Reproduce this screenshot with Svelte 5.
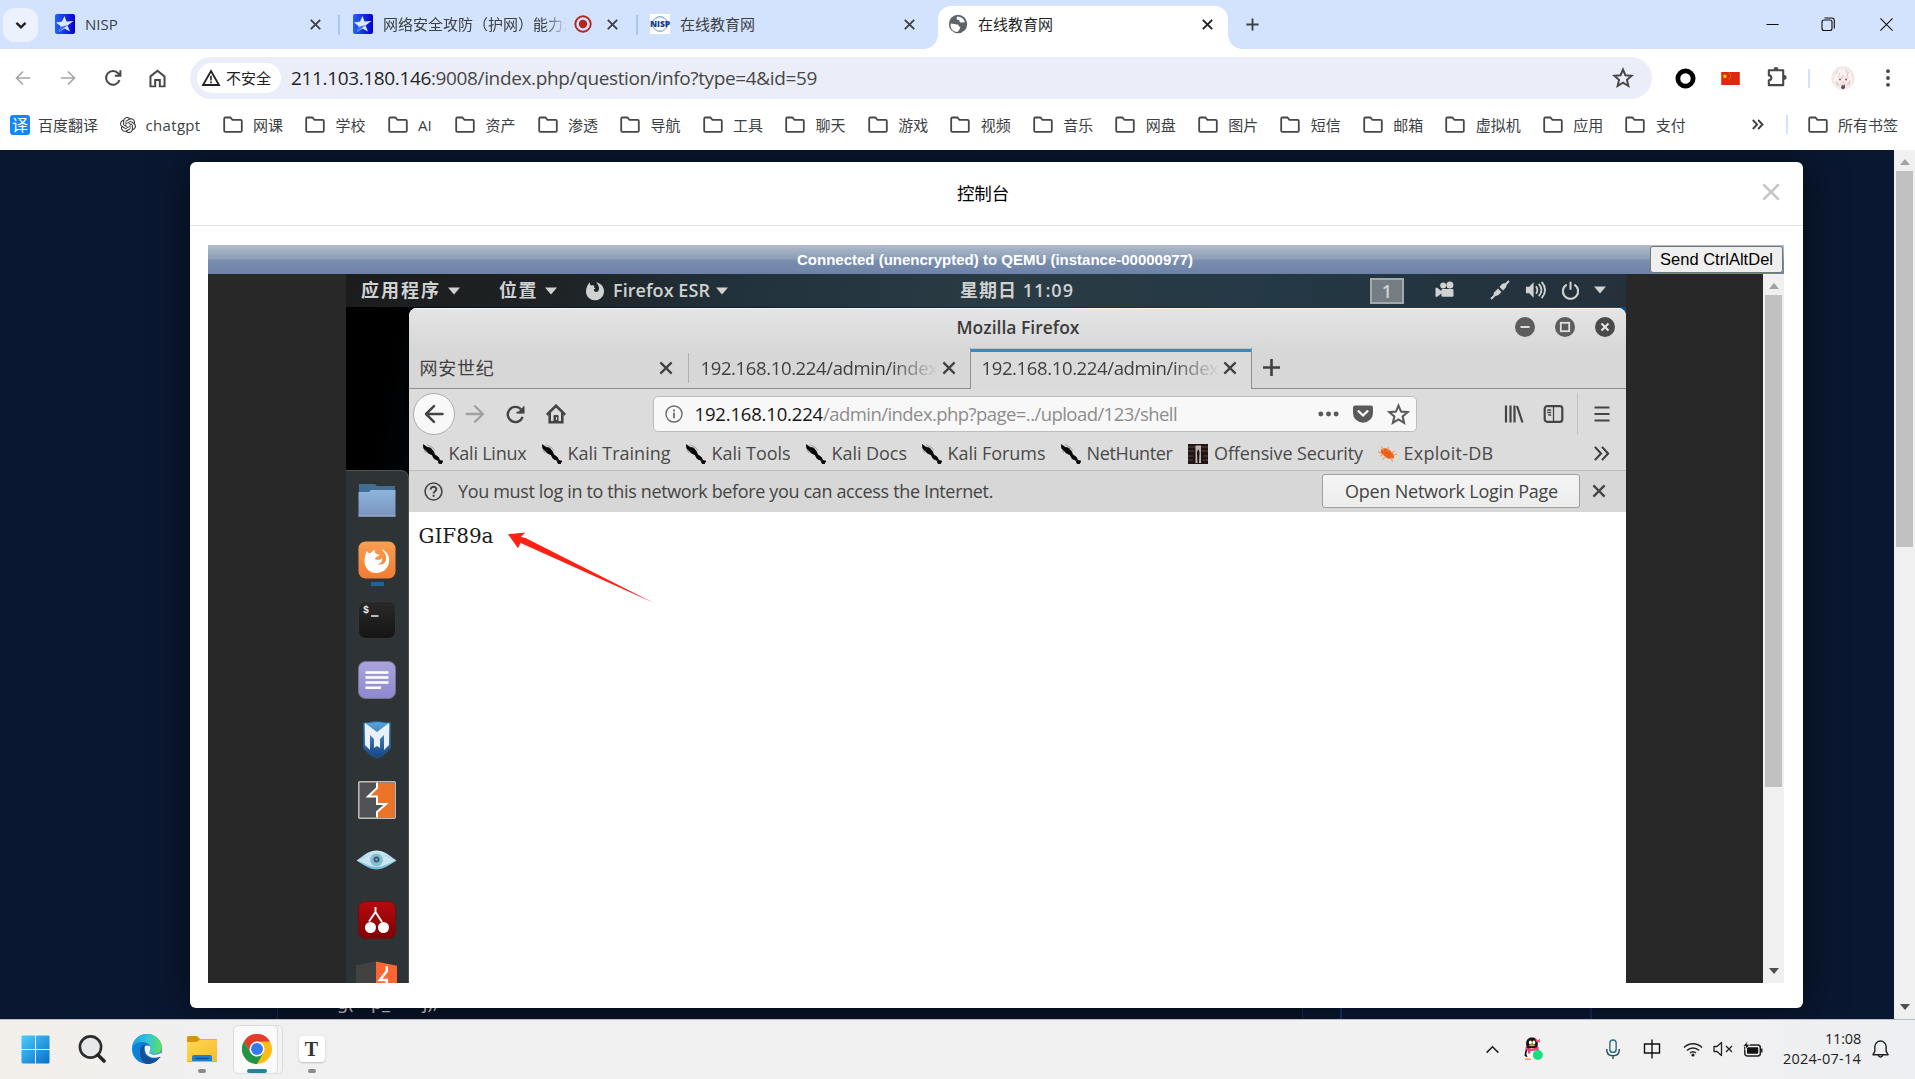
<script>
  // Gives a label a fixed advance width by spreading the difference over its letters.
  function fit(node, width) {
    const range = document.createRange();
    range.selectNodeContents(node);
    const natural = range.getBoundingClientRect().width;
    const count = [...node.textContent].length;
    node.style.letterSpacing = `${(width - natural) / count}px`;
    node.style.width = `${width}px`;
  }

  const cross = '<path d="M3 3l10 10M13 3L3 13" fill="none" stroke="currentColor" stroke-width="2"/>';
  const icons = {
    chevron: ['0 0 16 16', '<path d="M3.500 5.800L8 10.300l4.500-4.500" fill="none" stroke="currentColor" stroke-width="2.400"/>'],
    star: ['0 0 20 20', '<defs><linearGradient id="sg"><stop stop-color="#2463f5"/><stop offset="1" stop-color="#0500d0"/></linearGradient></defs><rect width="20" height="20" rx="2" fill="url(#sg)"/><path d="M9.500 2l2 5.500 7-.5-6 4.500 2.500 6-5.500-3L4 18l1.500-6L1 8.500l6-1z" fill="#dce8ff"/><path d="M5 13l8-2-4 3-5 4z" fill="#3d6ef0"/>'],
    nisp: ['0 0 20 20', '<rect width="20" height="20" fill="#fff"/><circle cx="10" cy="10" r="7.500" fill="none" stroke="#7fa3d8" stroke-width="1"/><path d="M5 15q5 4 10 0M5.500 5q4.500-3.500 9 0" fill="none" stroke="#b2c9ea"/>'],
    globe: ['0 0 20 20', '<circle cx="10" cy="10" r="9.200" fill="#5f6368"/><path d="M2.700 9.500c3 .2 4.300 1 6.300 1s1.500 2.500 3.500 2.500l-1 2.500-2 2.500C4.500 18 2 14 2.700 9.500zM9.500 2.600c-2 2-.5 3.500 1 3.300 1.500 0 .5 2.500 2.500 2.600 1.500 0 2-.8 4 .2A7.500 7.500 0 0 0 9.500 2.600z" fill="#fff"/>'],
    rec: ['0 0 18 18', '<circle cx="9" cy="9" r="7.700" fill="none" stroke="#b3261e" stroke-width="1.900"/><circle cx="9" cy="9" r="4.200" fill="#b3261e"/>'],
    x: ['0 0 16 16', cross],
    plus: ['0 0 16 16', '<path d="M8 1.500v13M1.500 8h13" fill="none" stroke="currentColor" stroke-width="2"/>'],
    min: ['0 0 16 16', '<path d="M1.500 8h13" stroke="#111" stroke-width="1.100"/>'],
    restore: ['0 0 16 16', '<rect x="2" y="4" width="10" height="10.500" rx="2" fill="none" stroke="#111" stroke-width="1.100"/><path d="M4.500 2h7.200a2.600 2.600 0 0 1 2.600 2.600v7.800" fill="none" stroke="#111" stroke-width="1.100"/>'],
    close: ['0 0 16 16', '<path d="M1.500 1.500l13 13M14.500 1.500l-13 13" stroke="#111" stroke-width="1.200"/>'],
    back: ['0 0 20 20', '<path d="M18 10H3M10 2.800L2.800 10 10 17.200" fill="none" stroke="currentColor" stroke-width="1.800"/>'],
    fwd: ['0 0 20 20', '<path d="M2 10h15M10 2.800l7.200 7.200-7.200 7.200" fill="none" stroke="currentColor" stroke-width="1.800"/>'],
    reload: ['0 0 20 20', '<path d="M16.500 12.200A6.900 6.900 0 1 1 15.300 5.500L17 7.400M17.400 2.200v5.600h-5.600" fill="none" stroke="currentColor" stroke-width="2"/>'],
    freload: ['0 0 20 20', '<path d="M17.500 12.500A8 8 0 1 1 16 4.800" fill="none" stroke="currentColor" stroke-width="2.500"/><path d="M19.300 1v8H11z" fill="currentColor"/><path d="M11 8h7.500V1.500" fill="none" stroke="currentColor" stroke-width="1.600"/><path d="M13.500 6.200L17 2.800" stroke="#dcdcdc" stroke-width=".1"/>'],
    home: ['0 0 20 20', '<path d="M3.300 8L10 2.600 16.700 8v9.500h-4.500v-6H7.800v6H3.300z" fill="none" stroke="currentColor" stroke-width="1.900"/>'],
    warn: ['0 0 20 20', '<path d="M10 3L18 17H2z" fill="none" stroke="#202124" stroke-width="1.800"/><path d="M10 7.800v4.700M10 13.600v1.700" stroke="#202124" stroke-width="1.600"/>'],
    mark: ['0 0 20 20', '<path d="M10 2.300l2.200 5.200 5.700.5-4.300 3.700 1.300 5.600-4.900-3-4.900 3 1.300-5.600L2.100 8l5.700-.5z" fill="none" stroke="currentColor" stroke-width="1.800"/>'],
    ring: ['0 0 22 22', '<circle cx="11" cy="11" r="8" fill="#fff" stroke="#000" stroke-width="5"/>'],
    flag: ['0 0 20 14', '<rect width="20" height="14" fill="#de2910"/><path d="M4 2l.8 1.800h2L5.200 5l.6 2L4 5.900 2.200 7l.6-2L1.200 3.800h2z" fill="#ffde00"/><path d="M8 1.400h1.200M9.500 3.200h1M9.500 5.500h1M8 7.400h1.200" stroke="#e8a010"/>'],
    puzzle: ['0 0 24 24', '<path d="M4 5.500h15V21H4v-5a2.600 2.600 0 0 0 0-5.200z" fill="none" stroke="currentColor" stroke-width="2.200" stroke-linejoin="round"/><path d="M9 5a2.500 3 0 0 1 5 0zM19.500 10.500a3 2.500 0 0 1 0 5z" fill="currentColor"/>'],
    avatar: ['0 0 24 24', '<circle cx="12" cy="12" r="11.800" fill="#f4e8e8"/><path d="M4 20C2 12 4 3 12 3s10 9 8 17l-3-2 .5-6-3-3-4 2-3-1-.5 5z" fill="#fbf4f3"/><path d="M7 11l2-4M12 9l-2 4M16 6l1 6M5 15l1 4M19 14l-1 5M4 8l3-3M14 4l4 3M6 17l2 3M16 19l2-3" stroke="#d9c4c6" fill="none"/><path d="M8 13.500h2M14 13.500h2" stroke="#a0606a" stroke-width="1.400"/><path d="M11 18l1 2 2-2v4l-2 1.500-2-1.500z" fill="#5d4e58"/><path d="M11.500 16.500h1.200" stroke="#e09090"/>'],
    dots: ['0 0 8 20', '<g fill="currentColor"><circle cx="4" cy="3.200" r="1.900"/><circle cx="4" cy="10" r="1.900"/><circle cx="4" cy="16.800" r="1.900"/></g>'],
    folder: ['0 0 20 18', '<path d="M1.200 14.700V2.700q0-1.200 1.200-1.200h5l2 2.300h8.200q1.200 0 1.200 1.200v9.700q0 1.200-1.200 1.200H2.400q-1.200 0-1.200-1.200z" fill="none" stroke="#474747" stroke-width="1.800"/>'],
    gpt: ['0 0 24 24', '<path fill="#333" d="M22.280 9.820a5.980 5.980 0 0 0-.52-4.910 6.050 6.050 0 0 0-6.510-2.900A6.070 6.070 0 0 0 4.980 4.180a5.980 5.980 0 0 0-4 2.900 6.050 6.050 0 0 0 .74 7.100 5.980 5.980 0 0 0 .51 4.910 6.050 6.050 0 0 0 6.520 2.900A5.980 5.980 0 0 0 13.260 24a6.060 6.060 0 0 0 5.770-4.210 5.990 5.990 0 0 0 4-2.900 6.060 6.060 0 0 0-.75-7.070zm-9.020 12.610a4.480 4.480 0 0 1-2.880-1.040l.14-.08 4.780-2.760a.8.8 0 0 0 .39-.68v-6.740l2.020 1.170a.07.07 0 0 1 .04.05v5.580a4.500 4.500 0 0 1-4.490 4.490zM3.600 18.300a4.470 4.470 0 0 1-.53-3.010l.14.09 4.780 2.760a.77.77 0 0 0 .78 0l5.840-3.370v2.330a.08.08 0 0 1-.03.06L9.740 19.950a4.500 4.500 0 0 1-6.140-1.650zM2.340 7.900a4.490 4.490 0 0 1 2.370-1.970v5.680a.77.77 0 0 0 .39.680l5.810 3.350-2.020 1.170a.08.08 0 0 1-.07 0l-4.830-2.790A4.500 4.500 0 0 1 2.340 7.870zm16.600 3.860L13.100 8.360l2.020-1.160a.08.08 0 0 1 .07 0l4.830 2.790a4.490 4.490 0 0 1-.68 8.100v-5.670a.79.79 0 0 0-.4-.67zm2.010-3.020l-.14-.09-4.770-2.780a.78.78 0 0 0-.79 0L9.410 9.230V6.900a.07.07 0 0 1 .03-.06l4.830-2.790a4.500 4.500 0 0 1 6.680 4.660zM8.310 12.860l-2.020-1.160a.08.08 0 0 1-.04-.06V6.070a4.500 4.500 0 0 1 7.380-3.450l-.14.08-4.780 2.760a.8.8 0 0 0-.39.680zm1.100-2.370l2.600-1.500 2.600 1.500v3l-2.600 1.500-2.600-1.500z"/>'],
    more: ['0 0 16 16', '<path d="M3 3.200L7.600 8 3 12.800M8.700 3.200L13.300 8l-4.600 4.800" fill="none" stroke="currentColor" stroke-width="2"/>'],
    modalx: ['0 0 20 20', '<path d="M1.500 1.500l17 17M18.500 1.500l-17 17" stroke="#c6c6c6" stroke-width="3" fill="none"/>'],
    tri: ['0 0 12 8', '<path d="M0 .5h12L6 7.500z" fill="currentColor"/>'],
    triup: ['0 0 10 6', '<path d="M5 0l5 6H0z" fill="currentColor"/>'],
    tridown: ['0 0 10 6', '<path d="M0 0h10L5 6z" fill="currentColor"/>'],
    fox: ['0 0 20 20', '<path d="M5 1C4.500 3 5 4 6.500 4.500c1.500-.5 2 0 3 .6-1 1-.5 1.800 1 2.400-1.700.5-2 1.500-1.200 2.700 2 1.800 4.500.3 4.700-2.200C14.200 5 13 3.500 11 1.200 16 2 19.400 6 19 11c-.5 5-4.400 8.400-9.300 8.300C4.500 19 1 15 1 10.500 1 6.500 2.800 3.500 5 1z" fill="currentColor"/>'],
    cam: ['0 0 22 20', '<g fill="currentColor"><circle cx="9.500" cy="5" r="3.300"/><circle cx="17" cy="4.500" r="3.900"/><path d="M8 9h11.500a1.500 1.500 0 0 1 1.500 1.500V16a1.500 1.500 0 0 1-1.500 1.500H9A1.500 1.500 0 0 1 7.500 16v-2L3 17.500H1v-10h2L7.500 11z"/></g>'],
    plug: ['0 0 20 20', '<path d="M1 19L6 14M14 6l5-5" stroke="currentColor" stroke-width="2"/><path d="M5 11.500l3-3 3.500 3.500-3 3c-2 1.500-4 .5-4.500 0s-.8-2 1-3.500zM9.500 7l2.500-3c2-1.500 3.500-.5 4 0s1.200 2-.5 4L13 10.500z" fill="currentColor"/>'],
    vol: ['0 0 22 20', '<path d="M1 6.500h3.500L9 2v16l-4.500-4.500H1z" fill="currentColor"/><path d="M11.500 6q3 4 0 8M14.500 3.500q5.500 6.500 0 13M17.500 1.500q7 8.500 0 17" fill="none" stroke="currentColor" stroke-width="1.900"/>'],
    power: ['0 0 20 20', '<path d="M6 3.800a8 8 0 1 0 8 0M10 .8v8.500" fill="none" stroke="currentColor" stroke-width="2.200"/>'],
    wmin: ['0 0 20 20', '<circle cx="10" cy="10" r="10" fill="#5d5d5d"/><path d="M5.500 10h9" stroke="#e0e0e0" stroke-width="2.200"/>'],
    wmax: ['0 0 20 20', '<circle cx="10" cy="10" r="10" fill="#5d5d5d"/><rect x="5.800" y="5.800" width="8.400" height="8.400" fill="none" stroke="#e0e0e0" stroke-width="1.800"/>'],
    wclose: ['0 0 20 20', '<circle cx="10" cy="10" r="10" fill="#4a4a4a"/><path d="M6.500 6.500l7 7M13.500 6.500l-7 7" stroke="#e8e8e8" stroke-width="2"/>'],
    fback: ['0 0 20 20', '<path d="M18.500 10H2.500M10 2.200L2 10l8 7.800" fill="none" stroke="currentColor" stroke-width="2.500" stroke-linecap="round" stroke-linejoin="round"/>'],
    ffwd: ['0 0 20 20', '<path d="M1.500 10h16M10 2.200L18 10l-8 7.800" fill="none" stroke="currentColor" stroke-width="2.300" stroke-linecap="round" stroke-linejoin="round"/>'],
    fhome: ['0 0 20 20', '<path d="M.8 10.700L10 1.700l9.200 9" fill="none" stroke="currentColor" stroke-width="2.600"/><path d="M3.700 9v9.300h12.600V9" fill="none" stroke="currentColor" stroke-width="2.600"/><path d="M7.500 18.500V12q0-1 1-1h3q1 0 1 1v6.500z" fill="currentColor"/><path d="M10.500 13v3" stroke="#ddd"/>'],
    info: ['0 0 18 18', '<circle cx="9" cy="9" r="8" fill="none" stroke="#6a6a6a" stroke-width="1.400"/><path d="M9 7.800v5.500M9 4.500v1.900" stroke="#6a6a6a" stroke-width="1.800"/>'],
    help: ['0 0 18 18', '<circle cx="9" cy="9" r="8" fill="none" stroke="#444" stroke-width="1.500"/><path d="M6.300 7.200c0-3.800 5.600-3.300 5.400-.2-.1 1.800-2.600 1.800-2.600 3.900M9.100 12v2" stroke="#444" stroke-width="1.900" fill="none"/>'],
    hdots: ['0 0 22 6', '<g fill="#5a5a5a"><circle cx="3" cy="3" r="2.600"/><circle cx="11" cy="3" r="2.600"/><circle cx="19" cy="3" r="2.600"/></g>'],
    pocket: ['0 0 20 18', '<path d="M2 .5h16q2 0 2 2V8A10 9.700 0 0 1 0 8V2.500q0-2 2-2z" fill="#5a5a5a"/><path d="M5.500 6.200l4.500 4.300 4.500-4.300" fill="none" stroke="#f8f8f8" stroke-width="2.300" stroke-linecap="round"/>'],
    lib: ['0 0 20 20', '<path d="M2 1.500v17M6.500 1.500v17M10.500 1.500v17M13 2l5.500 16.500" stroke="currentColor" stroke-width="2.200" fill="none"/>'],
    side: ['0 0 20 18', '<rect x="1.200" y="1.200" width="17.600" height="15.600" rx="2.500" fill="none" stroke="currentColor" stroke-width="2.200"/><path d="M10 1.500v15M3.700 5h4M3.700 7.500h4M4.700 10h3" stroke="currentColor" stroke-width="1.300"/>'],
    menu: ['0 0 16 16', '<path d="M.5 1.500h15M.5 8h15M.5 14.500h15" stroke="currentColor" stroke-width="2.100"/>'],
    fmore: ['0 0 18 18', '<path d="M2 2l6.500 7L2 16M9.500 2l6.500 7-6.500 7" fill="none" stroke="#3c3c3c" stroke-width="2.200"/>'],
    kali: ['0 0 20 20', '<path d="M.3.600L4 3.300l3.500.7 3 3.500 1 3 3.800 2.700 1.500 3.300 3 .5-1.500 3-2.300-.5-.8-3-4-1.800-2.200-4-3.500-1.500L3 6.500.8 4.500z" fill="#080808" stroke="#080808" stroke-width=".8" stroke-linejoin="round"/><path d="M4 .5l5.500 3 2.500 3M1 6l2 3" fill="none" stroke="#888" stroke-width=".7"/>'],
    offsec: ['0 0 20 20', '<rect width="20" height="20" fill="#211414"/><path d="M0 3h20M0 7h6M14 7h6M0 12h5M15 12h5M0 16h5M15 16h5" stroke="#5c4747" stroke-width="1"/><path d="M7.500 1.500h5.500V19H7.500z" fill="#bdb4b0"/><path d="M10.300 5l1.200 3-.5 11H9.500L9 8z" fill="#1c1010"/>'],
    bug: ['0 0 18 18', '<path d="M3 5c3-2 6-1 8.500 1.500 1.500 1 3 3.500 3 6-4 1.500-7 .5-9-2C3 9.500 1.800 7 3 5z" fill="#ee6018"/><path d="M5 6L3 2M9 6l.5-3.500M12 8l3-1.500M14 10l3-1M5 9L2 11M7 11l-3 3M12 12l1 4M3 8L0 7" fill="none" stroke="#f19a68" stroke-width="1"/>'],
    dfolder: ['0 0 38 38', '<defs><linearGradient id="df" x2="0" y2="1"><stop stop-color="#8db5dc"/><stop offset="1" stop-color="#7b93bd"/></linearGradient></defs><path d="M1 3h16l2 2h18v10H1z" fill="#416f91"/><path d="M.5 11H11l2-2h24.500v26.500H.5z" fill="url(#df)"/><path d="M.5 35h37" stroke="#a4bbd8"/>'],
    dfox: ['0 0 38 38', '<defs><linearGradient id="do" x2="0" y2="1"><stop stop-color="#f8a052"/><stop offset="1" stop-color="#f07c32"/></linearGradient></defs><rect x=".5" y=".5" width="37" height="37" rx="7" fill="url(#do)"/><path d="M9 10c1 2 2 2 4 2 1-2 3-3 4-3-1 3 1 4 5 5-3 2-5 2-5 4 4 2 6 0 7-1 1 4-2 6-5 6 5 2 10-1 9-7 0-4-3-5-4-8 5 3 8 7 7 13-1 7-6 11-13 11S7 27 6.500 21c0-4 .5-8 2.500-11z" fill="#fff"/>'],
    dterm: ['0 0 38 38', '<defs><linearGradient id="dt" x2="0" y2="1"><stop stop-color="#292929"/><stop offset="1" stop-color="#151515"/></linearGradient></defs><rect x=".5" y=".5" width="37" height="37" rx="7" fill="url(#dt)" stroke="#363636"/><path d="M13 15h7.500" stroke="#eee" stroke-width="1.500"/>'],
    dtext: ['0 0 38 38', '<defs><linearGradient id="dx" x2="0" y2="1"><stop stop-color="#aaa4dc"/><stop offset="1" stop-color="#8e88ce"/></linearGradient></defs><rect x=".5" y=".5" width="37" height="37" rx="7" fill="url(#dx)" stroke="#777093"/><path d="M7.500 11.500h23M7.500 16.500h23M7.500 21.500h23M7.500 26.700H23" stroke="#fff" stroke-width="2.500"/>'],
    dmeta: ['0 0 38 38', '<defs><linearGradient id="dm" x2="0" y2="1"><stop stop-color="#5aa5de"/><stop offset="1" stop-color="#124180"/></linearGradient></defs><path d="M5.500 2Q19-1 32.500 2v25q-5 7-13.500 10Q10.500 34 5.500 27z" fill="url(#dm)" stroke="#24598c"/><path d="M7 2l12 9L31 2v22l-5 5V14l-4 4v9l-3-2-3 2v-9l-4-4v15l-5-5z" fill="#e9f0f8"/>'],
    dburp: ['0 0 38 38', '<rect x=".8" y=".8" width="36.400" height="36.400" rx="1" fill="#505254" stroke="#c3beb8" stroke-width="1.500"/><path d="M19 2h17.500v34.500H19v-5.500l9-8h-9v-7.500h-9L19 7z" fill="#eb7429"/><path d="M19 1.500V7l-9 8.500h9V23h9l-9 8v5.500" fill="none" stroke="#fff" stroke-width="2"/>'],
    deye: ['0 0 40 20', '<defs><linearGradient id="de" x2="0" y2="1"><stop stop-color="#d5edf4"/><stop offset="1" stop-color="#6bb8d5"/></linearGradient></defs><path d="M0 10.500C9 4 13 .5 20 .5S31 4 40 10.500C31 16 27 19.500 20 19.500S9 16 0 10.500z" fill="url(#de)"/><path d="M1 10.500C10 7 15 4 20 4s10 3 19 6.500C30 14 27 17 20 17s-10-3-19-6.500z" fill="#c7e6f1"/><circle cx="20" cy="10" r="6.500" fill="#84bfd6"/><circle cx="20" cy="9.500" r="3" fill="#365868"/><circle cx="20" cy="9.500" r="1.300" fill="#92a4ac"/>'],
    dcherry: ['0 0 38 38', '<defs><linearGradient id="dc" x2="0" y2="1"><stop stop-color="#b50b0e"/><stop offset="1" stop-color="#810004"/></linearGradient></defs><rect x=".5" y=".5" width="37" height="37" rx="7" fill="url(#dc)" stroke="#6d0f10"/><circle cx="12.500" cy="26.500" r="5.500" fill="#fff"/><circle cx="25.500" cy="26.500" r="5.500" fill="#fff"/><path d="M17.500 6v5L11 20.500M17.500 11l6.500 10" stroke="#fff" stroke-width="1.900" fill="none"/>'],
    dburp2: ['0 0 42 40', '<path d="M0 5L20.500 1v39H0z" fill="#424242"/><path d="M20.500 1L42 5.500V40H20.500z" fill="#ff6633"/><path d="M31.500 6v5l-7 9h7v5h8" stroke="#fff" stroke-width="2.500" fill="none"/>'],
    win: ['0 0 30 30', '<defs><linearGradient id="wn" x2="1" y2="1"><stop stop-color="#4ccdfb"/><stop offset="1" stop-color="#0470cc"/></linearGradient></defs><path d="M1.500.5H14.500v14H.5V1.500zM15.500.5h13l1 1v13h-14zM.5 15.500h14v14h-13l-1-1zM15.500 15.500h14v13l-1 1h-13z" fill="url(#wn)"/>'],
    search: ['0 0 28 28', '<circle cx="12.500" cy="12" r="10.600" fill="#e7e8ea" stroke="#2d2d2d" stroke-width="2.600"/><path d="M20 20l6 6" stroke="#262626" stroke-width="3.600" stroke-linecap="round"/>'],
    edge: ['0 0 30 30', '<defs><linearGradient id="e1" x2="1"><stop stop-color="#1d9cdc"/><stop offset=".5" stop-color="#31c3e2"/><stop offset="1" stop-color="#5fe052"/></linearGradient><linearGradient id="e2" x2="1"><stop stop-color="#0a86df"/><stop offset="1" stop-color="#1269b9"/></linearGradient></defs><circle cx="15" cy="15" r="15" fill="url(#e2)"/><path d="M0 14C.5 6 7 0 15 0c9 0 15 7 15 13.500 0 5-4 6.500-8 6.500-3 0-4.500-1-4.500-2 0-1 1-1.500 1-3.500C18.500 9.500 13 7.500 9 8 4 8.500 1 11 0 14z" fill="url(#e1)"/><path d="M8 17c0-3 2-5.500 5-6.500-3 6 1 14 9 14 3 0 5-1.200 6-1.800C25.500 27.500 20.500 30 16 30c-5 0-8-6-8-13z" fill="#124d96"/><path d="M13 11c-2 1.500-2.500 4-1 7 2 5 9 7.500 16 4l.5 1.500-1 .8C21 27 13 24 11 18c-.7-3 0-5.700 2-7z" fill="#0c62ae"/><path d="M13 12c3-1.500 5.500 0 5.500 2.500S17 17.500 17.500 19c.5 1 3 2 7 1.500 2-.3 4-1.500 4.500-2l1 4-2 .2c-6 2.500-13 .3-14.500-4.200-.8-2.500-1-5-.5-6.500z" fill="#f1f2f3"/>'],
    explorer: ['0 0 30 28', '<defs><linearGradient id="ex" x2="1" y2="1"><stop stop-color="#ffd957"/><stop offset="1" stop-color="#fcb82a"/></linearGradient></defs><path d="M0 8V2.500Q0 1 1.500 1H10l3 3h16l1 1v4z" fill="#d8940c"/><path d="M0 7h10l3-2.500h17V26q0 1-1 1H0z" fill="url(#ex)"/><path d="M5 27v-5q0-2 2-2h16q2 0 2 2v5z" fill="#1683d8"/><path d="M9 23.500h12" stroke="#0d4f94" stroke-width="1.600" stroke-linecap="round"/><path d="M0 26.500h30" stroke="#edaf24"/>'],
    chrome: ['0 0 30 30', '<circle cx="15" cy="15" r="15" fill="#fbbc16"/><path d="M2 7.500A15 15 0 0 1 28 7.500H15L8.500 18.700z" fill="#e33b2e"/><path d="M2 7.500A15 15 0 0 0 15 30l6.500-11.300L8.500 18.700z" fill="#229447"/><circle cx="15" cy="15" r="7.500" fill="#fff"/><circle cx="15" cy="15" r="6" fill="#3479ee"/>'],
    up: ['0 0 16 10', '<path d="M1.500 8.500L8 2l6.500 6.500" fill="none" stroke="#222" stroke-width="1.800"/>'],
    qq: ['0 0 20 24', '<path d="M3.500 10C2 3 5 .5 9 .5S16 3 14.500 10l2 6-2 4H4l-2.500-1 .5-4z" fill="#17151a"/><ellipse cx="9" cy="16.500" rx="5.500" ry="5.500" fill="#fff"/><path d="M2.500 10q6 3.500 13-.5v3q-7 3-13 .3z" fill="#f43d79"/><path d="M5 12.500v4h2.500v-4z" fill="#f43d79"/><ellipse cx="7.400" cy="5.500" rx="1.500" ry="2" fill="#fff"/><ellipse cx="10.800" cy="5.500" rx="1.500" ry="2" fill="#fff"/><path d="M5.500 8.500q3.500 1.500 7 0-3.500-2.500-7 0z" fill="#f8a900"/><path d="M12 1l3 2.500 2-2v4l-4-1z" fill="#ff4b89"/><path d="M2 21.500h6V23H2z" fill="#f8a900"/><circle cx="14.800" cy="18" r="5" fill="#16df7c"/>'],
    mic: ['0 0 16 22', '<rect x="4.700" y="1" width="6.600" height="13" rx="3.300" fill="none" stroke="#2d7185" stroke-width="1.500"/><path d="M1.500 10.500v1q0 6 6.500 6t6.500-6v-1M8 17.500V21" fill="none" stroke="#28505d" stroke-width="1.500"/>'],
    zhong: ['0 0 18 20', '<path d="M1.500 5h15v9h-15zM9 .5v19" fill="none" stroke="#111" stroke-width="1.400"/>'],
    wifi: ['0 0 20 16', '<path d="M1 6.500a12.500 12.500 0 0 1 18 0M4 9.500a8.300 8.300 0 0 1 12 0M7 12a4.500 4.500 0 0 1 6 0" fill="none" stroke="#222" stroke-width="1.500"/><circle cx="10" cy="14" r="1.600" fill="#222"/>'],
    mute: ['0 0 20 16', '<path d="M1 5.500h3L8.500 1.500v13L4 10.500H1z" fill="none" stroke="#222" stroke-width="1.300" stroke-linejoin="round"/><path d="M13 5l6 6M19 5l-6 6" stroke="#222" stroke-width="1.300"/>'],
    batt: ['0 0 20 16', '<rect x="1.800" y="4" width="15.500" height="11" rx="2.500" fill="none" stroke="#222" stroke-width="1.500"/><rect x="4" y="6.200" width="11.200" height="6.600" rx=".7" fill="#111"/><path d="M18.500 7.500v4" stroke="#222" stroke-width="2"/><path d="M4.500 0L0 5.500h3L2 9l5-5.500H4z" fill="#111" stroke="#f0f0f0" stroke-width=".7"/>'],
    bell: ['0 0 18 22', '<path d="M1 16.500l2-3.500V8a6 6 0 0 1 12 0v5l2 3.500zM6.500 17a2.600 2.600 0 0 0 5 0" fill="none" stroke="#222" stroke-width="1.500" stroke-linejoin="round"/>']
  };

  const bookmarks = ['网课', '学校', 'AI', '资产', '渗透', '导航', '工具', '聊天', '游戏', '视频', '音乐', '网盘', '图片', '短信', '邮箱', '虚拟机', '应用', '支付'];
  const guestLinks = [
    ['kali', 'Kali Linux', 78, 15], ['kali', 'Kali Training', 103, 15], ['kali', 'Kali Tools', 79, 15],
    ['kali', 'Kali Docs', 75.500, 14.500], ['kali', 'Kali Forums', 98, 15], ['kali', 'NetHunter', 86, 15.500],
    ['offsec', 'Offensive Security', 149, 14.500], ['bug', 'Exploit-DB', 90, 0]
  ];
</script>

{#snippet icon(name, w, h = w)}
  <svg width={w} height={h} viewBox={icons[name][0]}>{@html icons[name][1]}</svg>
{/snippet}

<div class="screen">
  <header class="tabs">
    <button class="tabmenu">{@render icon('chevron', 16)}</button>
    <div class="tab t1">{@render icon('star', 20)}<span class="name">NISP</span>{@render icon('x', 15)}</div>
    <i class="sep"></i>
    <div class="tab t2">{@render icon('star', 20)}<span class="name fade">网络安全攻防（护网）能力测</span>{@render icon('rec', 18)}{@render icon('x', 15)}</div>
    <i class="sep"></i>
    <div class="tab t3"><span class="nisp">{@render icon('nisp', 20)}<b use:fit={20}>NISP</b></span><span class="name">在线教育网</span>{@render icon('x', 15)}</div>
    <div class="tab t4">{@render icon('globe', 20)}<span class="name">在线教育网</span>{@render icon('x', 15)}</div>
    <span class="newtab">{@render icon('plus', 15)}</span>
    <div class="winbtns">{@render icon('min', 15)}{@render icon('restore', 16)}{@render icon('close', 15)}</div>
  </header>

  <div class="chrome">
    <div class="toolbar">
      <div class="nav"><span class="off">{@render icon('back', 18)}</span><span class="off">{@render icon('fwd', 18)}</span><span>{@render icon('reload', 20)}</span><span>{@render icon('home', 21)}</span></div>
      <div class="omnibox">
        <div class="chip">{@render icon('warn', 20)}<span>不安全</span></div>
        <div class="url" use:fit={526}><em>211.103.180.146</em>:9008/index.php/question/info?type=4&amp;id=59</div>
        <span class="bookmark">{@render icon('mark', 22)}</span>
      </div>
      <div class="ext">
        {@render icon('ring', 21)}{@render icon('flag', 19, 13)}{@render icon('puzzle', 23)}<i></i>{@render icon('avatar', 24)}{@render icon('dots', 8, 20)}
      </div>
    </div>
    <div class="marks">
      <a class="bm fy"><span class="yi">译</span><span>百度翻译</span></a>
      <a class="bm gpt">{@render icon('gpt', 16)}<span use:fit={55}>chatgpt</span></a>
      {#each bookmarks as b}
        <a class="bm">{@render icon('folder', 20, 18)}<span class="bt">{b}</span></a>
      {/each}
      <div class="allmarks">{@render icon('more', 15)}<i></i><a class="bm">{@render icon('folder', 20, 18)}<span>所有书签</span></a></div>
    </div>
  </div>

  <main class="page">
    <div class="under"><div class="u1"><span>g(&nbsp;&nbsp;&nbsp;'p_&nbsp;&nbsp;&nbsp;&nbsp;&nbsp;&nbsp;&nbsp;j),</span></div><div class="u2"></div><div class="u3"></div></div>
    <section class="modal">
      <div class="mhead"><h1 use:fit={52}>控制台</h1><span>{@render icon('modalx', 18)}</span></div>
      <div class="vnc">
        <div class="status"><strong use:fit={396}>Connected (unencrypted) to QEMU (instance-00000977)</strong><button><span use:fit={113}>Send CtrlAltDel</span></button></div>
        <div class="view">
          <div class="desktop">
            <div class="topbar">
              <span class="m1" use:fit={80}>应用程序</span>{@render icon('tri', 12, 8)}
              <span class="m2" use:fit={39}>位置</span>{@render icon('tri', 12, 8)}
              <span class="m3">{@render icon('fox', 20)}</span><span class="m4" use:fit={97}>Firefox ESR</span>{@render icon('tri', 12, 8)}
              <span class="clock" use:fit={114}>星期日 11:09</span>
              <span class="ws">1</span>
              <div class="sys">{@render icon('cam', 21, 18)}{@render icon('plug', 20)}{@render icon('vol', 21, 20)}{@render icon('power', 19)}{@render icon('tri', 12, 8)}</div>
            </div>
            <div class="work">
              <div class="left">
                <nav class="dock">
                  <span>{@render icon('dfolder', 38)}</span>
                  <span class="running">{@render icon('dfox', 38)}</span>
                  <span class="term">{@render icon('dterm', 38)}<b>$</b></span>
                  <span>{@render icon('dtext', 38)}</span>
                  <span>{@render icon('dmeta', 38)}</span>
                  <span>{@render icon('dburp', 38)}</span>
                  <span>{@render icon('deye', 41, 20)}</span>
                  <span>{@render icon('dcherry', 38)}</span>
                  <span class="last">{@render icon('dburp2', 41, 40)}</span>
                </nav>
              </div>
              <div class="firefox">
                <div class="title"><span use:fit={123}>Mozilla Firefox</span><div class="wb">{@render icon('wmin', 20)}{@render icon('wmax', 20)}{@render icon('wclose', 20)}</div></div>
                <div class="ftabs">
                  <div class="ft f1"><span class="cj" use:fit={75}>网安世纪</span>{@render icon('x', 18)}</div>
                  <div class="ft f2"><span class="clip"><span use:fit={237}>192.168.10.224/admin/index</span></span>{@render icon('x', 18)}</div>
                  <div class="ft f3"><span class="clip"><span use:fit={237}>192.168.10.224/admin/index</span></span>{@render icon('x', 18)}</div>
                  <div class="ft fplus">{@render icon('plus', 21)}</div>
                </div>
                <div class="fnav">
                  <span class="circle">{@render icon('fback', 20)}</span>
                  <span class="fw">{@render icon('ffwd', 20)}</span>
                  <span class="rl">{@render icon('freload', 19)}</span>
                  <span class="hm">{@render icon('fhome', 20)}</span>
                  <div class="furl">{@render icon('info', 18)}<div><em use:fit={128.500}>192.168.10.224</em><span use:fit={354}>/admin/index.php?page=../upload/123/shell</span></div><div class="fi">{@render icon('hdots', 21, 6)}{@render icon('pocket', 20, 18)}{@render icon('mark', 23)}</div></div>
                  <div class="fr">{@render icon('lib', 20)}{@render icon('side', 21, 18)}<i></i>{@render icon('menu', 16)}</div>
                </div>
                <div class="fmarks">
                  {#each guestLinks as [name, text, width, gap]}
                    <a style:margin-right="{gap}px">{@render icon(name, 20)}<span use:fit={width}>{text}</span></a>
                  {/each}
                  <span class="fmore">{@render icon('fmore', 17)}</span>
                </div>
                <div class="notice">{@render icon('help', 19)}<span class="msg" use:fit={535}>You must log in to this network before you can access the Internet.</span><button><span use:fit={213}>Open Network Login Page</span></button>{@render icon('x', 18)}</div>
                <div class="doc"><span use:fit={75}>GIF89a</span>
                  <svg class="arrow" width="148" height="72" viewBox="0 0 148 72"><path d="M0 2.200L17.500.5 12.800 4.800 18 6.300 146 71 16 12.500 12.500 11 10 16.200z" fill="#ff2113"/></svg>
                </div>
              </div>
            </div>
          </div>
          <div class="scroll inner">{@render icon('triup', 10, 6)}<i></i>{@render icon('tridown', 10, 6)}</div>
        </div>
      </div>
    </section>
    <div class="scroll outer">{@render icon('triup', 10, 6)}<i></i>{@render icon('tridown', 10, 6)}</div>
  </main>

  <footer class="taskbar">
    <div class="apps">
      <span class="app first">{@render icon('win', 29)}</span>
      <span class="app">{@render icon('search', 28)}</span>
      <span class="app">{@render icon('edge', 30)}</span>
      <span class="app open">{@render icon('explorer', 30, 28)}</span>
      <span class="app active">{@render icon('chrome', 30)}</span>
      <span class="app open"><b class="typora">T</b></span>
    </div>
    <div class="tray">
      {@render icon('up', 15, 9)}{@render icon('qq', 20, 24)}{@render icon('mic', 16, 21)}{@render icon('zhong', 18, 20)}{@render icon('wifi', 20, 16)}{@render icon('mute', 20, 16)}{@render icon('batt', 20, 16)}
      <div class="time"><span use:fit={36}>11:08</span><span use:fit={78}>2024-07-14</span></div>
      {@render icon('bell', 17, 21)}
    </div>
  </footer>
</div>

<style>
  :global(body) { margin: 0; overflow: hidden; }
  svg { display: block; flex: none; }
  em, i { font-style: normal; }
  button { padding: 0; margin: 0; border: 0; }
  .screen { width: 1915px; height: 1079px; display: flex; flex-direction: column; overflow: hidden; font-family: "Open Sans", "Noto Sans CJK SC", sans-serif; line-height: 1; }

  .tabs { height: 49px; background: #d3e3fd; display: flex; align-items: center; color: #3c4043; flex: none; }
  .tabmenu { margin-left: 3px; width: 35px; height: 34px; border-radius: 12px; background: #ebf2fe; display: flex; align-items: center; justify-content: center; color: #1f1f1f; }
  .tab { height: 22px; display: flex; align-items: center; box-sizing: border-box; font-size: 15px; padding-bottom: 2px; }
  .tab .name { flex: 1; margin-left: 10px; line-height: 20px; white-space: nowrap; overflow: hidden; }
  .t1 { width: 300px; padding: 0 15px 1px 17px; }
  .t2 { width: 296px; padding: 0 16px 1px 13px; }
  .t2 .fade { flex: none; width: 184px; margin-right: 7px; -webkit-mask-image: linear-gradient(90deg, #000 88%, transparent); mask-image: linear-gradient(90deg, #000 88%, transparent); }
  .t2 svg:last-child { margin-left: 13px; }
  .t3 { width: 300px; padding: 0 21px 1px 12px; }
  .t4 { width: 290px; height: 43px; margin-top: 6px; padding: 0 13px 7px 10px; background: #fff; border-radius: 13px 13px 0 0; position: relative; color: #1f1f1f; }
  .t4::before, .t4::after { content: ''; position: absolute; bottom: 0; width: 14px; height: 14px; }
  .t4::before { left: -14px; background: radial-gradient(circle at 0 0, transparent 13.500px, #fff 14px); }
  .t4::after { right: -14px; background: radial-gradient(circle at 100% 0, transparent 13.500px, #fff 14px); }
  .nisp { position: relative; }
  .nisp b { position: absolute; left: 0; top: 6px; font: 800 8.500px/8px "Open Sans", sans-serif; color: #123d8d; }
  .sep { width: 2px; height: 20px; background: #a8c7fa; }
  .newtab { margin-left: 16.500px; }
  .winbtns { margin-left: auto; display: flex; align-items: center; margin-right: 21px; margin-top: -1px; }
  .winbtns svg + svg { margin-left: 40px; }
  .winbtns svg:last-child { margin-left: 43px; }

  .chrome { background: #fff; height: 101px; flex: none; }
  .toolbar { height: 58px; display: flex; align-items: center; color: #474747; }
  .nav { width: 190px; display: flex; }
  .nav span { width: 45px; height: 24px; display: flex; align-items: center; justify-content: center; }
  .nav .off { color: #a5a5a5; }
  .omnibox { width: 1462px; height: 42px; box-sizing: border-box; border-radius: 21px; background: #ebeef8; display: flex; align-items: center; padding-left: 7px; }
  .chip { width: 84px; height: 30px; background: #fff; border-radius: 15px; display: flex; align-items: center; box-sizing: border-box; padding-left: 4px; font-size: 15px; color: #1f1f1f; gap: 5px; }
  .url { margin-left: 10px; font-size: 19px; color: #474747; white-space: nowrap; }
  .url em { color: #1f1f1f; }
  .bookmark { margin-left: auto; margin-right: 18px; }
  .ext { display: flex; align-items: center; flex: 1; }
  .ext svg:nth-child(1) { margin-left: 23px; }
  .ext svg:nth-child(2) { margin-left: 25px; }
  .ext svg:nth-child(3) { margin-left: 25px; margin-top: -3px; }
  .ext i { width: 2px; height: 19px; background: #d3e3fd; margin-left: 20px; }
  .ext svg:nth-child(5) { margin-left: 21px; }
  .ext svg:nth-child(6) { margin-left: 29px; }
  .marks { display: flex; align-items: center; height: 35px; color: #3c4043; padding-left: 10px; }
  .bm { display: flex; align-items: center; font-size: 15px; white-space: nowrap; margin-right: 22px; gap: 10.500px; line-height: 20px; }
  .bt { min-width: 15px; }
  .fy { gap: 8px; }
  .gpt { gap: 9.500px; }
  .yi { width: 20px; height: 20px; border-radius: 3px; background: #1486f8; color: #fff; text-align: center; font-size: 16px; }
  .allmarks { margin-left: auto; display: flex; align-items: center; }
  .allmarks i { width: 2px; height: 19px; background: #d3e3fd; margin: 0 20px 0 21px; }
  .allmarks .bm { margin-right: 17px; gap: 10px; }

  .page { height: 869px; flex: none; background: #0a1730; position: relative; display: flex; overflow: hidden; }
  .under { position: absolute; inset: auto 21px 0 277px; height: 40px; display: flex; }
  .under > div { border-left: 1px solid #17295c; background: #091529; box-sizing: border-box; }
  .u1 { width: 1026px; border-right: 1px solid #17295c; position: relative; }
  .u1 span { position: absolute; left: 59px; bottom: 8px; color: #ccc; font: 18px/18px "Noto Sans", sans-serif; }
  .under .u2 { margin-left: 37px; width: 251px; border-left: 2px solid #1b2f6c; border-right: 1px solid #17295c; background: #0b1734; }
  .modal { position: relative; margin: 12px 0 0 190px; width: 1613px; height: 846px; background: #fff; border-radius: 6px; box-shadow: 1px 1px 40px rgba(0, 0, 0, .5); }
  .mhead { height: 64px; box-sizing: border-box; border-bottom: 1px solid #e4e4e4; display: flex; align-items: center; padding-left: 767px; }
  .mhead h1 { margin: 0; font-size: 17.500px; font-weight: 400; color: #000; white-space: nowrap; }
  .mhead > span { margin-left: auto; margin-right: 23px; margin-top: -3px; }
  .vnc { margin: 19px 0 0 18px; width: 1576px; height: 738px; display: flex; flex-direction: column; }
  .status { height: 29px; background: linear-gradient(#b0bccd 0%, #8c9db5 49%, #7b8fb0 51%, #6d82a6 100%); display: flex; align-items: center; color: #fff; font: bold 15px/15px "Liberation Sans", Arial, sans-serif; padding-left: 589px; }
  .status strong { white-space: nowrap; }
  .status button { margin-left: auto; margin-right: 1px; width: 133px; height: 27px; box-sizing: border-box; border: 1px solid #767676; border-radius: 3px; background: #efefef; font: 16.500px/20px "Liberation Sans", Arial, sans-serif; color: #000; display: flex; align-items: center; padding: 0 0 1px 9px; white-space: nowrap; }
  .view { flex: 1; background: #282828; display: flex; min-height: 0; }
  .desktop { margin-left: 138px; width: 1280px; background: linear-gradient(100deg, #000 0, #000408 3%, #01141f 8%, #0b4f82 100%); display: flex; flex-direction: column; overflow: hidden; }
  .topbar { height: 33px; flex: none; display: flex; align-items: center; background: linear-gradient(100deg, #1c1c1d, #1e2325 17%, #22333d 32%, #2a3b44 52%, #233945 72%, #25303a 100%); color: #d0d2d2; font: bold 18px/24px "Open Sans", "Noto Sans CJK SC", sans-serif; }
  .topbar span { white-space: nowrap; font-weight: 600; }
  .m1 { margin: -1px 7px 0 15px; }
  .m2 { margin: -1px 7px 0 39px; }
  .m3 { margin-left: 28px; }
  .m4 { margin: -1px 6px 0 8px; }
  .clock { margin: -1px 0 0 232px; }
  .ws { margin-left: 296px; width: 34px; height: 26px; box-sizing: border-box; border: 2px solid #a3aaae; background: #737d83; text-align: center; line-height: 22px; }
  .sys { display: flex; align-items: center; margin-left: 30px; margin-top: -1px; }
  .sys svg:nth-child(2) { margin-left: 35px; }
  .sys svg:nth-child(3) { margin-left: 15px; }
  .sys svg:nth-child(4) { margin-left: 15px; }
  .sys svg:nth-child(5) { margin-left: 14px; }
  .work { flex: 1; display: flex; min-height: 0; }
  .left { width: 62.500px; padding-top: 163px; box-sizing: border-box; overflow: hidden; flex: none; background: linear-gradient(100deg, #000 30%, #001420); }
  .dock { box-sizing: border-box; width: 62.500px; height: 514px; background: #2e3436; border-radius: 0 8px 0 0; border-top: 1px solid #4d5254; border-right: 1px solid #4b5051; display: flex; flex-direction: column; }
  .dock span { height: 60px; flex: none; display: flex; align-items: center; justify-content: center; position: relative; }
  .dock span:first-child { margin-top: -1px; }
  .running::after { content: ''; position: absolute; left: 25px; bottom: 4px; width: 13px; height: 4px; background: #2160a5; }
  .term b { position: absolute; left: 17px; top: 15px; color: #eee; font: bold 10px/12px "Liberation Mono", monospace; }
  .dock .last { align-items: flex-start; padding-top: 10px; }

  .firefox { flex: 1; min-width: 0; margin-top: 1px; background: #fff; border-radius: 8px 8px 0 0; overflow: hidden; display: flex; flex-direction: column; color: #444; font: 18.500px/24px "Open Sans", "Noto Sans CJK SC", sans-serif; white-space: nowrap; }
  .title { height: 40px; box-sizing: border-box; padding-bottom: 2px; display: flex; align-items: center; background: linear-gradient(#e5e5e5, #d8d8d8); padding-left: 548px; font-weight: 600; font-size: 17.500px; color: #3b3b3b; box-shadow: inset 0 1px #f5f5f5; flex: none; }
  .wb { margin-left: auto; margin-right: 11px; display: flex; gap: 20px; }
  .ftabs { height: 41px; background: #d7d7d7; display: flex; flex: none; }
  .ft { display: flex; align-items: center; box-sizing: border-box; border-bottom: 1px solid #8f8f8f; padding-bottom: 1px; color: #404040; }
  .f1 { width: 280.500px; padding-left: 11px; }
  .f1::after { content: ''; align-self: center; margin-left: 13px; width: 1px; height: 30px; background: #b1b1b1; }
  .f1 svg { margin-left: auto; }
  .cj { font-size: 18px; }
  .f2 { width: 281px; padding-left: 11.500px; }
  .f3 { width: 282px; padding-left: 10.500px; border: solid #909090; border-width: 0 1px; background: linear-gradient(#c2c2c2 0 1px, #2a8fd2 1px 4px, #dbdbdb 4px); }
  .clip { width: 237px; margin-right: 2px; overflow: hidden; -webkit-mask-image: linear-gradient(90deg, #000 80%, transparent 100%); mask-image: linear-gradient(90deg, #000 80%, transparent 100%); flex: none; }
  .clip span { display: block; }
  .fplus { flex: 1; padding-left: 9px; }
  .fnav { height: 50px; background: #dcdcdc; display: flex; align-items: center; flex: none; }
  .circle { margin-left: 4px; width: 42px; height: 42px; box-sizing: border-box; border: 1.500px solid #adadad; border-radius: 50%; background: #f8f8f8; display: flex; align-items: center; justify-content: center; }
  .fw { margin-left: 10px; color: #a0a0a0; }
  .rl { margin-left: 21px; }
  .hm { margin-left: 21px; }
  .furl { margin-left: 87.500px; width: 764px; height: 36px; box-sizing: border-box; border: 1.500px solid #bcbcbc; border-radius: 5px; background: #f8f8f8; display: flex; align-items: center; padding-left: 11px; }
  .furl > div:nth-child(2) { margin-left: 11.500px; display: flex; }
  .furl em { color: #151515; }
  .furl span { color: #8d8d8d; }
  .fi { margin-left: auto; display: flex; align-items: center; margin-right: 6px; color: #5a5a5a; }
  .fi svg + svg { margin-left: 14px; }
  .fr { margin-left: auto; display: flex; align-items: center; margin-right: 16px; }
  .fr svg:nth-child(2) { margin-left: 19px; }
  .fr i { width: 1px; height: 42px; background: #c3c3c3; margin: 0 16px 0 13px; }
  .fmarks { height: 32px; flex: none; box-sizing: border-box; background: #dcdcdc; border-bottom: 1px solid #bbb; display: flex; align-items: center; padding: 0 0 2px 14px; }
  .fmarks a { display: flex; align-items: center; gap: 6px; color: #494949; font-size: 18px; }
  .fmarks a span { margin-top: -2px; }
  .fmore { margin-left: auto; margin-right: 16px; }
  .notice { height: 41px; box-sizing: border-box; padding-bottom: 1px; flex: none; background: #d7d7d7; display: flex; align-items: center; padding-left: 15px; }
  .msg { margin-left: 15.500px; margin-top: -1px; font-size: 18px; }
  .notice button { margin-left: 329px; margin-right: 10.500px; width: 257.500px; height: 34px; box-sizing: border-box; border: 1.500px solid #a0a0a0; border-radius: 3px; background: linear-gradient(#f5f5f5, #ececec); display: flex; align-items: center; padding: 0 0 1px 22px; font: 18px/24px "Open Sans", sans-serif; color: #444; }
  .doc { flex: 1; position: relative; padding: 12px 0 0 10px; color: #1b1b1b; font: 20px/26px "DejaVu Serif", serif; background: #fff; }
  .doc span { display: block; margin-top: -1px; }
  .arrow { position: absolute; left: 99.500px; top: 20px; }

  .scroll { width: 21px; background: #f0f0f0; display: flex; flex-direction: column; align-items: center; box-sizing: border-box; padding: 9px 0; color: #a3a3a3; flex: none; }
  .scroll i { width: 17px; background: #c1c1c1; margin: 6px 0 auto; }
  .scroll svg:last-child { color: #4f4f4f; }
  .inner { margin-left: auto; }
  .inner i { height: 492px; }
  .outer { margin-left: auto; height: 869px; }
  .outer i { height: 376px; }

  .taskbar { height: 60px; box-sizing: border-box; border-top: 1px solid #b9bcc3; background: linear-gradient(90deg, #f3efea, #f0f0f0 10%, #f1f1f1 85%, #eeeff2); display: flex; align-items: center; flex: none; padding-bottom: 1px; }
  .apps { display: flex; margin-left: 9px; align-items: center; }
  .app { width: 55px; height: 48px; display: flex; align-items: center; justify-content: center; position: relative; }
  .first svg { margin-right: 2px; }
  .open::after, .active::after { content: ''; position: absolute; bottom: 0; left: 23.500px; width: 8px; height: 4px; border-radius: 2px; background: #8a8a8a; }
  .active::before { content: ''; position: absolute; left: 3.500px; top: 0; width: 43px; height: 47px; background: #fafafa; border: 1px solid #dcdcdc; border-radius: 5px; box-shadow: 5px 0 0 -1px #f4f4f4, 5px 0 0 0 #dcdcdc; }
  .active svg { position: relative; }
  .active::after { width: 20px; left: 17.500px; background: #27839a; }
  .typora { width: 26px; height: 26px; border-radius: 4px; background: #fff; box-shadow: 0 1px 2px #bbb; text-align: center; font: bold 20px/26px "Liberation Serif", serif; color: #333; }
  .tray { margin-left: auto; display: flex; align-items: center; margin-right: 26px; }
  .tray svg:nth-child(2) { margin-left: 23px; }
  .tray svg:nth-child(3) { margin-left: 62px; }
  .tray svg:nth-child(4) { margin-left: 22px; }
  .tray svg:nth-child(5) { margin-left: 22px; }
  .tray svg:nth-child(6) { margin-left: 10px; }
  .tray svg:nth-child(7) { margin-left: 10px; }
  .time { display: flex; flex-direction: column; align-items: flex-end; width: 98px; margin-right: 11px; font-size: 14.500px; line-height: 20px; color: #222; white-space: nowrap; }
</style>
